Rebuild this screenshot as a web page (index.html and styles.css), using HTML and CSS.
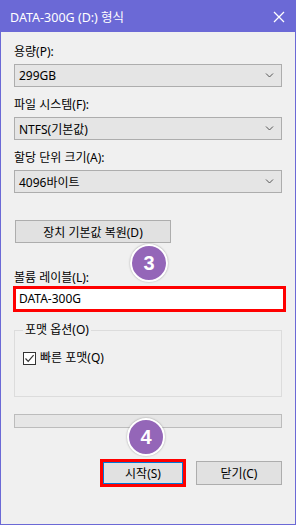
FILE: index.html
```html
<!DOCTYPE html>
<html lang="ko">

<head>
    <meta charset="UTF-8">
    <meta name="viewport" content="width=device-width, initial-scale=1.0">
    <title>DATA-300G (D:) 형식</title>
    <link rel="stylesheet" href="styles.css">
</head>

<body>
    <div class="window">
        <div class="title-bar">
            <span class="title">DATA-300G (D:) 형식</span>
            <svg class="close-icon" width="12" height="12" viewBox="0 0 12 12">
                <path d="M1 1 L11 11 M11 1 L1 11" stroke="#fff" stroke-width="1.3" fill="none" />
            </svg>
        </div>

        <div class="content">
            <div class="field">
                <label>용량(P):</label>
                <div class="combo">
                    <span>299GB</span>
                    <svg class="chevron" width="9" height="5" viewBox="0 0 9 5"><path d="M1 0.5 L4.5 4 L8 0.5" stroke="#555" fill="none" /></svg>
                </div>
            </div>
            <div class="field">
                <label>파일 시스템(F):</label>
                <div class="combo">
                    <span>NTFS(기본값)</span>
                    <svg class="chevron" width="9" height="5" viewBox="0 0 9 5"><path d="M1 0.5 L4.5 4 L8 0.5" stroke="#555" fill="none" /></svg>
                </div>
            </div>
            <div class="field">
                <label>할당 단위 크기(A):</label>
                <div class="combo">
                    <span>4096바이트</span>
                    <svg class="chevron" width="9" height="5" viewBox="0 0 9 5"><path d="M1 0.5 L4.5 4 L8 0.5" stroke="#555" fill="none" /></svg>
                </div>
            </div>

            <button class="btn btn-restore" type="button">장치 기본값 복원(D)</button>

            <label class="volume-label">볼륨 레이블(L):</label>
            <div class="volume-input">DATA-300G</div>

            <fieldset class="options">
                <legend>포맷 옵션(O)</legend>
                <div class="check-row">
                    <span class="checkbox">
                        <svg width="11" height="11" viewBox="0 0 11 11"><path d="M1.5 5.5 L4.2 8.3 L9.6 2.2" stroke="#333" stroke-width="1.2" fill="none" /></svg>
                    </span>
                    <span>빠른 포맷(Q)</span>
                </div>
            </fieldset>

            <div class="progress"></div>

            <div class="actions">
                <button class="btn btn-start" type="button">시작(S)</button>
                <button class="btn btn-close" type="button">닫기(C)</button>
            </div>
        </div>

        <div class="badge badge-3">3</div>
        <div class="badge badge-4">4</div>
    </div>
</body>

</html>
```

FILE: styles.css
```css
* {
    box-sizing: border-box;
}

body {
    margin: 0;
    font-family: "Noto Sans", "Noto Sans CJK KR", sans-serif;
    font-size: 12px;
    color: #000;
}

.window {
    position: relative;
    width: 296px;
    height: 525px;
    border: 1px solid #6b69d6;
    background: #f0f0f0;
}

.title-bar {
    height: 31px;
    background: #6b69d6;
    color: white;
    display: flex;
    align-items: center;
    justify-content: space-between;
    padding: 0 10px 0 9px;
}

.title {
    font-size: 12.5px;
}

.content {
    padding: 12px 13px 0 13px;
}

.field {
    margin-bottom: 10px;
}

.field:last-of-type {
    margin-bottom: 0;
}

.field label,
.volume-label {
    display: block;
    line-height: 16px;
    margin-bottom: 4px;
}

.combo {
    height: 23px;
    border: 1px solid #adadad;
    background: #e5e5e5;
    display: flex;
    align-items: center;
    justify-content: space-between;
    padding: 0 7px 0 4px;
}

.btn {
    font-family: inherit;
    font-size: 12px;
    background: #e1e1e1;
    border: 1px solid #adadad;
    color: #000;
    padding: 0;
}

.btn-restore {
    display: block;
    width: 156px;
    height: 23px;
    margin: 27px 0 0 1px;
}

.volume-label {
    margin-top: 27px;
    margin-bottom: 0;
}

.volume-input {
    width: 273px;
    height: 26px;
    margin-left: -1px;
    border: 3px solid #f00;
    background: white;
    line-height: 20px;
    padding-left: 3px;
}

.options {
    margin: 10px 0 0 0;
    padding: 0 7px 30px 8px;
    border: 1px solid #dcdcdc;
}

.options legend {
    padding: 0 2px;
    line-height: 16px;
}

.check-row {
    display: flex;
    align-items: center;
    gap: 4px;
    line-height: 16px;
    margin-top: 12px;
}

.checkbox {
    width: 13px;
    height: 13px;
    border: 1px solid #333;
    background: white;
    display: flex;
    align-items: center;
    justify-content: center;
}

.progress {
    margin-top: 17px;
    height: 14px;
    border: 1px solid #bcbcbc;
    background: #e6e6e6;
}

.actions {
    margin-top: 31px;
    display: flex;
    justify-content: flex-end;
    align-items: center;
    gap: 10px;
}

.btn-start {
    width: 86px;
    height: 28px;
    border: 3px solid #f00;
    box-shadow: inset 0 0 0 1px #0078d7;
}

.btn-close {
    width: 86px;
    height: 24px;
}

.badge {
    position: absolute;
    width: 38px;
    height: 38px;
    border-radius: 50%;
    background: #9466b8;
    border: 2px solid white;
    box-shadow: 0 0 2px rgba(0, 0, 0, 0.35);
    color: white;
    font-family: "Liberation Sans", sans-serif;
    font-weight: bold;
    font-size: 20px;
    display: flex;
    align-items: center;
    justify-content: center;
}

.badge-3 {
    left: 129px;
    top: 243px;
}

.badge-4 {
    left: 126px;
    top: 417px;
}
```
